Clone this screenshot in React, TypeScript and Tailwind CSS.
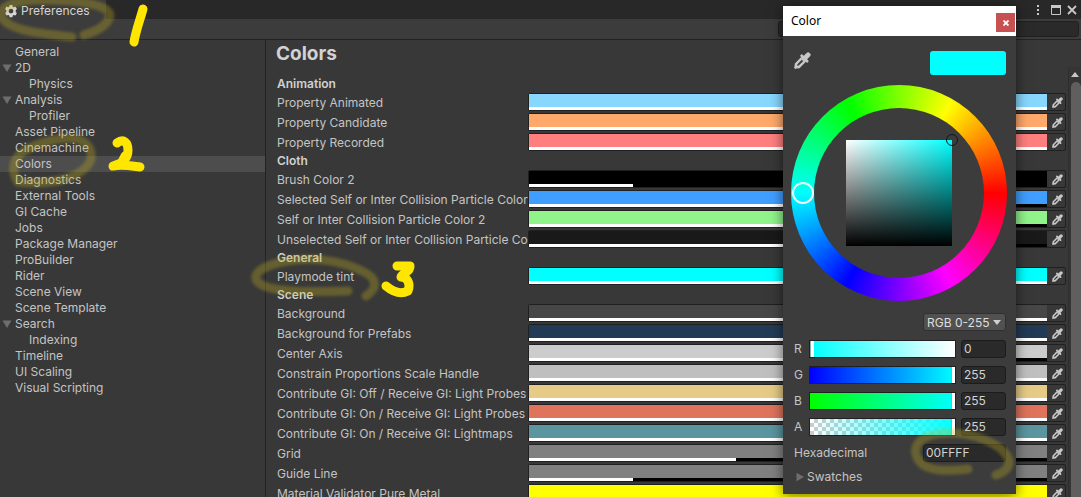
import React from "react";

type NavItem = { label: string; depth?: number; open?: boolean };

const NAV: NavItem[] = [
  { label: "General" },
  { label: "2D", open: true },
  { label: "Physics", depth: 1 },
  { label: "Analysis", open: true },
  { label: "Profiler", depth: 1 },
  { label: "Asset Pipeline" },
  { label: "Cinemachine" },
  { label: "Colors" },
  { label: "Diagnostics" },
  { label: "External Tools" },
  { label: "GI Cache" },
  { label: "Jobs" },
  { label: "Package Manager" },
  { label: "ProBuilder" },
  { label: "Rider" },
  { label: "Scene View" },
  { label: "Scene Template" },
  { label: "Search", open: true },
  { label: "Indexing", depth: 1 },
  { label: "Timeline" },
  { label: "UI Scaling" },
  { label: "Visual Scripting" },
];

type ColorPref = { label: string; color: string; alpha: number };

const SECTIONS: { title: string; rows: ColorPref[] }[] = [
  {
    title: "Animation",
    rows: [
      { label: "Property Animated", color: "#87d7ff", alpha: 100 },
      { label: "Property Candidate", color: "#ffa86b", alpha: 100 },
      { label: "Property Recorded", color: "#ff7f7f", alpha: 100 },
    ],
  },
  {
    title: "Cloth",
    rows: [
      { label: "Brush Color 2", color: "#000000", alpha: 20 },
      { label: "Selected Self or Inter Collision Particle Color", color: "#409eff", alpha: 70 },
      { label: "Self or Inter Collision Particle Color 2", color: "#90f48b", alpha: 70 },
      { label: "Unselected Self or Inter Collision Particle Col", color: "#191919", alpha: 70 },
    ],
  },
  { title: "General", rows: [{ label: "Playmode tint", color: "#00ffff", alpha: 100 }] },
  {
    title: "Scene",
    rows: [
      { label: "Background", color: "#474747", alpha: 100 },
      { label: "Background for Prefabs", color: "#213b57", alpha: 100 },
      { label: "Center Axis", color: "#cccccc", alpha: 93 },
      { label: "Constrain Proportions Scale Handle", color: "#bfbfbf", alpha: 100 },
      { label: "Contribute GI: Off / Receive GI: Light Probes", color: "#e5cb85", alpha: 100 },
      { label: "Contribute GI: On / Receive GI: Light Probes", color: "#df735c", alpha: 100 },
      { label: "Contribute GI: On / Receive GI: Lightmaps", color: "#5b959f", alpha: 100 },
      { label: "Grid", color: "#808080", alpha: 40 },
      { label: "Guide Line", color: "#808080", alpha: 20 },
      { label: "Material Validator Pure Metal", color: "#ffff00", alpha: 100 },
    ],
  },
];

const SLIDERS = [
  { name: "R", value: 0, track: "bg-[linear-gradient(to_right,#00ffff,#ffffff)]" },
  { name: "G", value: 255, track: "bg-[linear-gradient(to_right,#0000ff,#00ffff)]" },
  { name: "B", value: 255, track: "bg-[linear-gradient(to_right,#00ff00,#00ffff)]" },
  {
    name: "A",
    value: 255,
    track:
      "bg-[linear-gradient(to_right,transparent,#00ffff),repeating-conic-gradient(#cccccc_0_25%,#ffffff_0_50%)] bg-[length:100%_100%,8px_8px]",
  },
];

function Eyedropper({ className }: { className: string }) {
  return (
    <svg viewBox="0 0 16 16" className={className} fill="none" stroke="currentColor" aria-hidden="true">
      <path strokeWidth="4.6" strokeLinecap="round" d="M10.500 5.500 13.300 2.700" />
      <path strokeWidth="2.600" strokeLinecap="round" d="M7.200 3.600 12.400 8.800" />
      <path
        fill="currentColor"
        fillRule="evenodd"
        stroke="none"
        d="M6.800 4.800 11.200 9.200 5.200 15.200 2.200 15.600 1.200 16 0 14.800.4 13.800.8 10.800zM7.400 7.400 3.200 11.600 3 13 4.400 12.800 8.600 8.600z"
      />
    </svg>
  );
}

function Triangle({ down = false }: { down?: boolean }) {
  return (
    <svg viewBox="0 0 10 10" className="size-[10px] shrink-0 text-[#6e6e6e]" aria-hidden="true">
      <path fill="currentColor" d={down ? "M.5 1.500H9.500L5 9z" : "M1.500 .8 9 5 1.500 9.200z"} />
    </svg>
  );
}

function TitleBar() {
  return (
    <header className="flex h-[19px] shrink-0 items-stretch justify-between bg-[#282828]">
      <div className="flex w-[106px] items-center gap-[3px] bg-[#3c3c3c] pt-[2px] pl-1 text-[#d6d6d6]">
        <svg viewBox="0 0 14 14" className="size-[14px]" aria-hidden="true">
          <path
            fill="currentColor"
            fillRule="evenodd"
            d="M5.600 1h2.800l.4 1.700 1 .5 1.600-.6 1.500 2.300-1.200 1.300v1.700l1.200 1.200-1.400 2.400-1.700-.5-1 .6-.4 1.700H5.600l-.4-1.700-1-.6-1.700.5L1.100 9.100l1.200-1.200V6.200L1.100 4.900l1.400-2.300 1.700.6 1-.5zM7 4.700a2.400 2.400 0 1 0 0 4.800 2.400 2.400 0 0 0 0-4.800z"
          />
        </svg>
        <span>Preferences</span>
      </div>
      <div className="flex items-center gap-[11px] pr-1 text-[#c8c8c8]">
        <button aria-label="Menu">
          <svg viewBox="0 0 4 12" className="h-3 w-1" fill="currentColor">
            <path d="M1 1h2v2H1zM1 5h2v2H1zM1 9h2v2H1z" />
          </svg>
        </button>
        <div className="flex gap-[6px]">
          <button aria-label="Maximize">
            <svg viewBox="0 0 10 10" className="size-[10px]">
              <path fill="none" stroke="currentColor" d="M.5.5h9v9h-9z" />
              <path fill="currentColor" d="M0 0h10v3H0z" />
            </svg>
          </button>
          <button aria-label="Close">
            <svg viewBox="0 0 10 10" className="size-[10px]">
              <path stroke="currentColor" strokeWidth="1.800" d="m1 1 8 8M9 1 1 9" />
            </svg>
          </button>
        </div>
      </div>
    </header>
  );
}

function Sidebar() {
  return (
    <nav className="w-[266px] shrink-0 border-r border-[#232323] pt-1">
      {NAV.map((item) => (
        <button
          key={item.label}
          className={`flex h-4 w-full items-center text-left ${item.depth ? "pl-[29px]" : item.open ? "gap-[3px] pl-[2px]" : "pl-[15px]"} ${item.label === "Colors" ? "bg-[#4d4d4d]" : ""}`}
        >
          {item.open && <Triangle down />}
          {item.label}
        </button>
      ))}
    </nav>
  );
}

function ColorRow({ label, color, alpha }: ColorPref) {
  return (
    <div className="flex h-5 items-start">
      <span className="h-[18px] w-[251px] shrink-0 leading-[20px] whitespace-nowrap">{label}</span>
      <div className="relative flex h-[18px] min-w-0 flex-1 rounded-[2px] border border-[#202020]">
        <button aria-label={label} className="flex min-w-0 flex-1 flex-col" style={{ backgroundColor: color }}>
          <span className="w-full flex-1" />
          <span className="h-[3px] w-full bg-black">
            <span className="block h-full bg-white" style={{ width: `${alpha}%` }} />
          </span>
        </button>
        <button aria-label={`Pick ${label}`} className="flex w-[18px] items-center justify-center pl-[2px] text-[#c8c8c8]">
          <Eyedropper className="size-[11px]" />
        </button>
      </div>
    </div>
  );
}

function ColorWheel() {
  return (
    <div className="relative mt-[10px] ml-2 flex size-[216px] items-center justify-center">
      <div className="absolute inset-0 rounded-full bg-[conic-gradient(from_90deg,#f00,#f0f,#00f,#0ff,#0f0,#ff0,#f00)]" />
      <div className="absolute inset-[23px] rounded-full bg-[#3c3c3c]" />
      <div className="relative size-[106px] bg-[linear-gradient(to_top,#000,transparent),linear-gradient(to_right,#fff,#0ff)]">
        <span className="absolute -top-[6px] -right-[6px] size-3 rounded-full border-[1.5px] border-[#101818]" />
      </div>
      <span className="absolute top-[97px] left-px size-[22px] rounded-full border-2 border-[#e4ffff]" />
    </div>
  );
}

function ColorPicker() {
  const field =
    "h-[18px] rounded-[3px] border border-[#1c1c1c] bg-[#2a2a2a] pl-[2px] text-[#d2d2d2] outline-none";
  return (
    <section
      aria-label="Color"
      className="absolute top-[6px] right-[65px] w-[233px] bg-[#3c3c3c] pb-2 shadow-[0_2px_12px_rgba(0,0,0,0.55)]"
    >
      <div className="flex h-[30px] items-center justify-between bg-white pr-px pl-2 text-black">
        <span className="font-['Noto_Sans',sans-serif] text-[12px]">Color</span>
        <button
          aria-label="Close color window"
          className="mt-[3px] flex size-[19px] items-center justify-center bg-[#c75050] text-white"
        >
          <svg viewBox="0 0 6 6" className="size-[6px]">
            <path stroke="currentColor" strokeWidth="1.800" d="m.5.5 5 5M5.500.5l-5 5" />
          </svg>
        </button>
      </div>
      <div className="flex items-start justify-between pt-[15px] pr-[10px] pl-[11px]">
        <button aria-label="Pick color" className="pt-px text-[#c8c8c8]">
          <Eyedropper className="size-[17px]" />
        </button>
        <span className="h-6 w-[76px] rounded-[3px] bg-[#00ffff]" />
      </div>
      <ColorWheel />
      <div className="flex justify-end pt-3 pr-[10px]">
        <div className="relative">
          <select
            aria-label="Color mode"
            className="h-[18px] w-[83px] appearance-none rounded-[3px] border border-[#303030] bg-[#515151] pl-[3px] text-[#dedede]"
          >
            <option>RGB 0-255</option>
          </select>
          <svg viewBox="0 0 8 5" className="pointer-events-none absolute top-[7px] right-[5px] h-[5px] w-2">
            <path fill="#d0d0d0" d="M0 0h8L4 5z" />
          </svg>
        </div>
      </div>
      <div className="flex flex-col gap-2 pt-2 pr-[10px] pl-[11px]">
        {SLIDERS.map(({ name, value, track }) => (
          <div key={name} className="flex h-[18px] items-center">
            <label htmlFor={`slider-${name}`} className="w-[15px]">
              {name}
            </label>
            <input
              id={`slider-${name}`}
              type="range"
              min={0}
              max={255}
              defaultValue={value}
              className={`h-[18px] w-[147px] appearance-none border border-[#202020] [&::-webkit-slider-thumb]:h-4 [&::-webkit-slider-thumb]:w-1 [&::-webkit-slider-thumb]:appearance-none [&::-webkit-slider-thumb]:border-l [&::-webkit-slider-thumb]:border-[#8fb0b0] [&::-webkit-slider-thumb]:bg-white ${track}`}
            />
            <input aria-label={`${name} value`} defaultValue={value} className={`${field} ml-auto w-[45px]`} />
          </div>
        ))}
        <div className="flex h-[18px] items-center justify-between">
          <label htmlFor="hex">Hexadecimal</label>
          <input id="hex" defaultValue="00FFFF" className={`${field} w-[83px]`} />
        </div>
      </div>
      <button className="mt-[6px] ml-3 flex h-[18px] items-center gap-[2px]">
        <Triangle />
        Swatches
      </button>
    </section>
  );
}

function Annotations() {
  return (
    <svg
      className="pointer-events-none absolute top-0 left-0 h-[497px] w-[1081px]"
      viewBox="0 0 1081 497"
      fill="none"
      strokeLinecap="round"
      strokeLinejoin="round"
      aria-hidden="true"
    >
      <g stroke="#c4b020" strokeOpacity="0.320" strokeWidth="9" className="blur-[1.5px]">
        <path d="M84 35C98 31 109 24 110 15 108 4 75 0 42 0 12 0-4 8 3 19 12 32 48 34 72 37" />
        <path d="M24 151C40 142 62 136 77 139 92 143 94 157 88 165 76 180 48 185 18 182 10 170 14 157 24 151" />
        <path d="M366 296C378 288 378 278 362 271 340 260 312 257 288 261 262 265 252 274 257 281 266 293 310 292 348 291" />
        <path d="M996 475C1011 470 1014 460 1000 448 980 434 952 430 932 435 914 440 912 452 920 462 928 472 950 471 968 469" />
      </g>
      <g stroke="#ffe600" strokeWidth="9">
        <path d="M143 9C140 20 136 30 134 42" />
        <path d="M117 143C124 138 128 143 128 150 128 158 124 163 113 166 122 164 132 166 140 167M125 156 122 162" />
        <path d="M397 266 410 266C411 272 401 274 401 277 407 277 411 283 408 291 400 295 392 291 386 286" />
      </g>
    </svg>
  );
}

export default function App() {
  return (
    <div className="relative flex h-screen flex-col overflow-hidden bg-[#383838] font-['Inter',sans-serif] text-[12px] text-[#c4c4c4]">
      <TitleBar />
      <div className="flex h-[21px] shrink-0 items-center justify-end border-b border-[#232323] bg-[#3c3c3c] pr-[2px]">
        <input
          type="search"
          aria-label="Search preferences"
          className="h-4 w-[301px] rounded-[3px] border border-[#202020] bg-[#2a2a2a]"
        />
      </div>
      <div className="flex min-h-0 flex-1">
        <Sidebar />
        <main className="flex min-w-0 flex-1 flex-col">
          <h1 className="h-[27px] shrink-0 pl-[10px] text-[19px] leading-[27px] font-bold text-[#d2d2d2]">Colors</h1>
          <div className="flex min-h-0 flex-1">
            <div className="min-w-0 flex-1 overflow-hidden pt-[9px] pr-[2px] pl-[11px]">
              {SECTIONS.map((section) => (
                <section key={section.title}>
                  <h2 className="h-[17px] leading-4 font-semibold text-[#d0d0d0]">{section.title}</h2>
                  {section.rows.map((row) => (
                    <ColorRow key={row.label} {...row} />
                  ))}
                </section>
              ))}
            </div>
            <div className="flex w-[13px] shrink-0 flex-col items-end border-l border-[#2e2e2e] bg-[#353535] pt-[5px]">
              <svg viewBox="0 0 8 5" className="mr-[2px] h-[5px] w-2" aria-hidden="true">
                <path fill="#c8c8c8" d="M0 5h8L4 0z" />
              </svg>
              <div className="mt-[5px] w-[10px] flex-1 rounded-t-[5px] bg-[#5f5f5f]" />
            </div>
          </div>
        </main>
      </div>
      <ColorPicker />
      <Annotations />
    </div>
  );
}
